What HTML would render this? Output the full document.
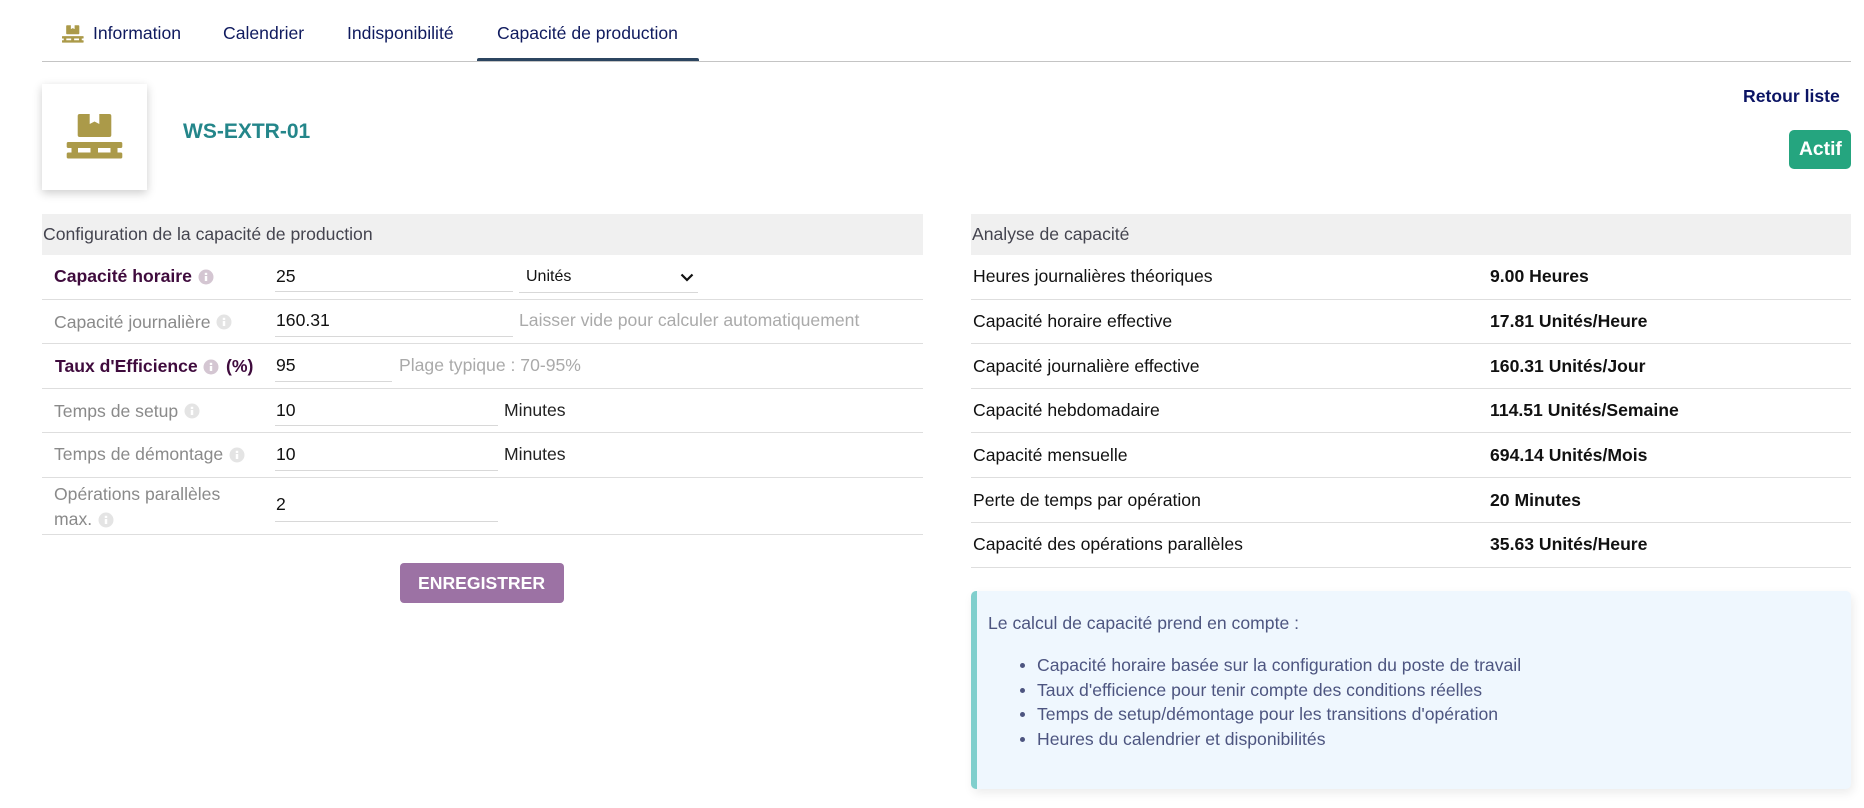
<!DOCTYPE html>
<html lang="fr"><head><meta charset="utf-8"><title>WS-EXTR-01</title>
<style>
html,body{margin:0;padding:0;background:#fff;}
body{width:1864px;height:808px;position:relative;overflow:hidden;font-family:"Liberation Sans",Arial,sans-serif;font-size:17.6px;}
.t{position:absolute;line-height:24px;height:24px;white-space:nowrap;}
.b{font-weight:700;}
.nav{color:#0f1a5e;}
.req{color:#3f0b3d;font-weight:700;}
.lab{color:#8a8a8a;}
.val{color:#111;}
.hint{color:#aaa;}
.line{position:absolute;height:1px;background:#dedede;}
.ul{position:absolute;height:1px;background:#d8d8d8;}
.hd{position:absolute;top:214px;height:41px;background:#f0f0f0;}
.i{position:absolute;}
</style></head><body>

<svg class="i" style="left:62px;top:25px" width="21.500" height="18" viewBox="67 114 55 45"><path fill="#ab9a49" fill-rule="evenodd" d="M79.700 114H89.700V124L94.500 121.500L99.300 124V114H109.300a2 2 0 0 1 2 2V135a2 2 0 0 1-2 2H79.700a2 2 0 0 1-2-2V116a2 2 0 0 1 2-2zM68.200 142H120.800a1.500 1.500 0 0 1 1.500 1.500v3a1.500 1.500 0 0 1-1.500 1.500H117.500v4.500h3.300a1.500 1.500 0 0 1 1.500 1.500v3a1.500 1.500 0 0 1-1.500 1.500H68.200a1.500 1.500 0 0 1-1.500-1.500v-3a1.500 1.500 0 0 1 1.500-1.500H71.500v-4.500h-3.300a1.500 1.500 0 0 1-1.500-1.500v-3a1.500 1.500 0 0 1 1.500-1.500zM78 148v4.500h12.500v-4.500zM98 148v4.500h12.500v-4.500z"/></svg>
<div class="t nav" style="left:93px;top:21px">Information</div>
<div class="t nav" style="left:223px;top:21px">Calendrier</div>
<div class="t nav" style="left:347px;top:21px">Indisponibilité</div>
<div class="t nav" style="left:497px;top:21px">Capacité de production</div>
<div class="i" style="left:42px;top:61px;width:1809px;height:1px;background:#c4c4c4"></div>
<div class="i" style="left:477px;top:58px;width:222px;height:3px;background:#2c4560;border-radius:2px 2px 0 0"></div>

<div class="i" style="left:42px;top:84px;width:105px;height:106px;background:#fff;box-shadow:0 3px 9px rgba(0,0,0,.2)"></div>
<svg class="i" style="left:66px;top:112px" width="57" height="48" viewBox="66 112 57 48"><path fill="#ab9a49" fill-rule="evenodd" d="M79.700 114H89.700V124L94.500 121.500L99.300 124V114H109.300a2 2 0 0 1 2 2V135a2 2 0 0 1-2 2H79.700a2 2 0 0 1-2-2V116a2 2 0 0 1 2-2zM68.200 142H120.800a1.500 1.500 0 0 1 1.500 1.500v3a1.500 1.500 0 0 1-1.500 1.500H117.500v4.500h3.300a1.500 1.500 0 0 1 1.500 1.500v3a1.500 1.500 0 0 1-1.500 1.500H68.200a1.500 1.500 0 0 1-1.500-1.500v-3a1.500 1.500 0 0 1 1.500-1.500H71.500v-4.500h-3.300a1.500 1.500 0 0 1-1.500-1.500v-3a1.500 1.500 0 0 1 1.500-1.500zM78 148v4.500h12.500v-4.500zM98 148v4.500h12.500v-4.500z"/></svg>
<div class="t b" style="left:183px;top:120px;font-size:21px;color:#24868a">WS-EXTR-01</div>
<div class="t b nav" style="left:1743px;top:84px;color:#0b1464">Retour liste</div>
<div class="i" style="left:1789px;top:130px;width:62px;height:39px;background:#25a57f;border-radius:5px"></div>
<div class="t b" style="left:1799px;top:138px;font-size:19.3px;color:#fff">Actif</div>

<div class="hd" style="left:42px;width:881px"></div>
<div class="hd" style="left:971px;width:880px"></div>
<div class="t" style="left:43px;top:222px;color:#44444f">Configuration de la capacité de production</div>
<div class="t" style="left:972px;top:222px;color:#44444f">Analyse de capacité</div>

<!-- left rows -->
<div class="line" style="left:42px;width:881px;top:299px"></div>
<div class="line" style="left:42px;width:881px;top:343px"></div>
<div class="line" style="left:42px;width:881px;top:388px"></div>
<div class="line" style="left:42px;width:881px;top:432px"></div>
<div class="line" style="left:42px;width:881px;top:477px"></div>
<div class="line" style="left:42px;width:881px;top:534px"></div>

<div class="t req" style="left:54px;top:264px">Capacité horaire</div>
<svg class="i" style="left:198px;top:269px" width="16" height="16" viewBox="0 0 16 16"><circle cx="8" cy="8" r="7.500" fill="#d4c6d2"/><rect x="6.800" y="7" width="2.400" height="5" fill="#fff"/><rect x="6.800" y="3.800" width="2.400" height="2.200" fill="#fff"/></svg>
<div class="t val" style="left:276px;top:264px">25</div>
<div class="ul" style="left:275px;width:238px;top:291px"></div>
<div class="t" style="left:526px;top:265px;font-size:16px;color:#111">Unités</div>
<svg class="i" style="left:679px;top:272px" width="16" height="11" viewBox="0 0 16 11"><path d="M2.500 2.500 8 8l5.500-5.500" fill="none" stroke="#111" stroke-width="2.200"/></svg>
<div class="ul" style="left:519px;width:179px;top:292px"></div>

<div class="t lab" style="left:54px;top:310px">Capacité journalière</div>
<svg class="i" style="left:216px;top:314px" width="16" height="16" viewBox="0 0 16 16"><circle cx="8" cy="8" r="7.500" fill="#e4e4e4"/><rect x="6.800" y="7" width="2.400" height="5" fill="#fff"/><rect x="6.800" y="3.800" width="2.400" height="2.200" fill="#fff"/></svg>
<div class="t val" style="left:276px;top:308px">160.31</div>
<div class="ul" style="left:275px;width:238px;top:336px"></div>
<div class="t hint" style="left:519px;top:308px">Laisser vide pour calculer automatiquement</div>

<div class="t req" style="left:55px;top:354px">Taux d'Efficience</div>
<svg class="i" style="left:203px;top:359px" width="16" height="16" viewBox="0 0 16 16"><circle cx="8" cy="8" r="7.500" fill="#d4c6d2"/><rect x="6.800" y="7" width="2.400" height="5" fill="#fff"/><rect x="6.800" y="3.800" width="2.400" height="2.200" fill="#fff"/></svg>
<div class="t req" style="left:226px;top:354px">(%)</div>
<div class="t val" style="left:276px;top:353px">95</div>
<div class="ul" style="left:275px;width:117px;top:381px"></div>
<div class="t hint" style="left:399px;top:353px">Plage typique : 70-95%</div>

<div class="t lab" style="left:54px;top:399px">Temps de setup</div>
<svg class="i" style="left:184px;top:403px" width="16" height="16" viewBox="0 0 16 16"><circle cx="8" cy="8" r="7.500" fill="#e4e4e4"/><rect x="6.800" y="7" width="2.400" height="5" fill="#fff"/><rect x="6.800" y="3.800" width="2.400" height="2.200" fill="#fff"/></svg>
<div class="t val" style="left:276px;top:398px">10</div>
<div class="ul" style="left:275px;width:223px;top:425px"></div>
<div class="t" style="left:504px;top:398px;color:#222">Minutes</div>

<div class="t lab" style="left:54px;top:442px">Temps de démontage</div>
<svg class="i" style="left:229px;top:447px" width="16" height="16" viewBox="0 0 16 16"><circle cx="8" cy="8" r="7.500" fill="#e4e4e4"/><rect x="6.800" y="7" width="2.400" height="5" fill="#fff"/><rect x="6.800" y="3.800" width="2.400" height="2.200" fill="#fff"/></svg>
<div class="t val" style="left:276px;top:442px">10</div>
<div class="ul" style="left:275px;width:223px;top:470px"></div>
<div class="t" style="left:504px;top:442px;color:#222">Minutes</div>

<div class="t lab" style="left:54px;top:482px">Opérations parallèles</div>
<div class="t lab" style="left:54px;top:507px">max.</div>
<svg class="i" style="left:98px;top:512px" width="16" height="16" viewBox="0 0 16 16"><circle cx="8" cy="8" r="7.500" fill="#e4e4e4"/><rect x="6.800" y="7" width="2.400" height="5" fill="#fff"/><rect x="6.800" y="3.800" width="2.400" height="2.200" fill="#fff"/></svg>
<div class="t val" style="left:276px;top:492px">2</div>
<div class="ul" style="left:275px;width:223px;top:521px"></div>

<div class="i" style="left:400px;top:563px;width:164px;height:40px;background:#9c72a4;border-radius:4px"></div>
<div class="t b" style="left:418px;top:571px;color:#fff">ENREGISTRER</div>

<!-- right rows -->
<div class="line" style="left:971px;width:880px;top:299px"></div>
<div class="line" style="left:971px;width:880px;top:343px"></div>
<div class="line" style="left:971px;width:880px;top:388px"></div>
<div class="line" style="left:971px;width:880px;top:432px"></div>
<div class="line" style="left:971px;width:880px;top:477px"></div>
<div class="line" style="left:971px;width:880px;top:522px"></div>
<div class="line" style="left:971px;width:880px;top:567px"></div>

<div class="t val" style="left:973px;top:264px">Heures journalières théoriques</div>
<div class="t val b" style="left:1490px;top:264px">9.00 Heures</div>
<div class="t val" style="left:973px;top:309px">Capacité horaire effective</div>
<div class="t val b" style="left:1490px;top:309px">17.81 Unités/Heure</div>
<div class="t val" style="left:973px;top:354px">Capacité journalière effective</div>
<div class="t val b" style="left:1490px;top:354px">160.31 Unités/Jour</div>
<div class="t val" style="left:973px;top:398px">Capacité hebdomadaire</div>
<div class="t val b" style="left:1490px;top:398px">114.51 Unités/Semaine</div>
<div class="t val" style="left:973px;top:443px">Capacité mensuelle</div>
<div class="t val b" style="left:1490px;top:443px">694.14 Unités/Mois</div>
<div class="t val" style="left:973px;top:488px">Perte de temps par opération</div>
<div class="t val b" style="left:1490px;top:488px">20 Minutes</div>
<div class="t val" style="left:973px;top:532px">Capacité des opérations parallèles</div>
<div class="t val b" style="left:1490px;top:532px">35.63 Unités/Heure</div>

<div class="i" style="left:971px;top:591px;width:880px;height:198px;box-sizing:border-box;background:#eff7fe;border-left:6px solid #80cfcd;border-radius:5px;box-shadow:2px 4px 10px rgba(0,0,0,.08)"></div>
<div class="t" style="left:988px;top:611px;color:#4d5580">Le calcul de capacité prend en compte :</div>
<div class="t" style="left:1037px;top:653px;color:#4d5580">Capacité horaire basée sur la configuration du poste de travail</div>
<div class="t" style="left:1037px;top:678px;color:#4d5580">Taux d'efficience pour tenir compte des conditions réelles</div>
<div class="t" style="left:1037px;top:702px;color:#4d5580">Temps de setup/démontage pour les transitions d'opération</div>
<div class="t" style="left:1037px;top:727px;color:#4d5580">Heures du calendrier et disponibilités</div>
<div class="i" style="left:1020px;top:663px;width:5px;height:5px;border-radius:50%;background:#4d5580"></div>
<div class="i" style="left:1020px;top:688px;width:5px;height:5px;border-radius:50%;background:#4d5580"></div>
<div class="i" style="left:1020px;top:712px;width:5px;height:5px;border-radius:50%;background:#4d5580"></div>
<div class="i" style="left:1020px;top:737px;width:5px;height:5px;border-radius:50%;background:#4d5580"></div>
</body></html>
